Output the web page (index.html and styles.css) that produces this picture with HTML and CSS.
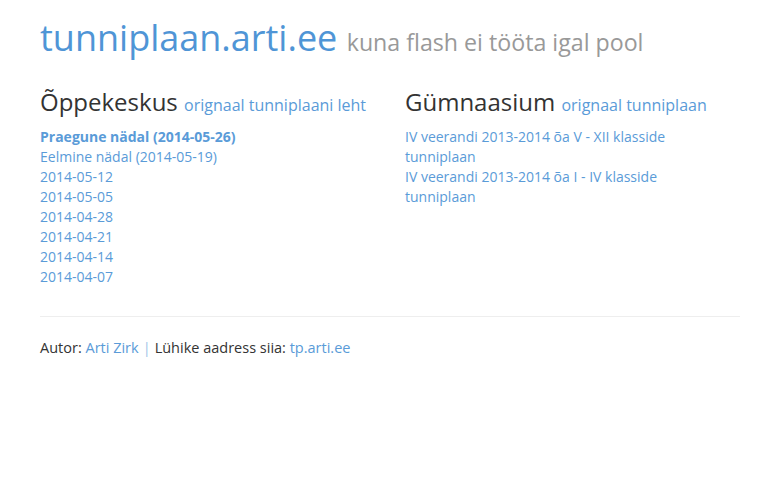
FILE: index.html
```html
<!DOCTYPE html>
<html lang="et">
<head>
<meta charset="utf-8">
<title>tunniplaan.arti.ee</title>
<link rel="stylesheet" href="styles.css">
</head>
<body>
<div class="container">
  <h1 class="title"><a href="#">tunniplaan.arti.ee</a> <small>kuna flash ei tööta igal pool</small></h1>
  <div class="columns">
    <div class="col">
      <h2>Õppekeskus <small><a href="#">orignaal tunniplaani leht</a></small></h2>
      <ul class="links">
        <li><a href="#" class="current">Praegune nädal (2014-05-26)</a></li>
        <li><a href="#">Eelmine nädal (2014-05-19)</a></li>
        <li><a href="#">2014-05-12</a></li>
        <li><a href="#">2014-05-05</a></li>
        <li><a href="#">2014-04-28</a></li>
        <li><a href="#">2014-04-21</a></li>
        <li><a href="#">2014-04-14</a></li>
        <li><a href="#">2014-04-07</a></li>
      </ul>
    </div>
    <div class="col">
      <h2>Gümnaasium <small><a href="#">orignaal tunniplaan</a></small></h2>
      <ul class="links">
        <li><a href="#">IV veerandi 2013-2014 õa V - XII klasside tunniplaan</a></li>
        <li><a href="#">IV veerandi 2013-2014 õa I - IV klasside tunniplaan</a></li>
      </ul>
    </div>
  </div>
  <hr class="divider">
  <p class="footer">Autor: <a href="#">Arti Zirk</a><span class="sep">|</span>Lühike aadress siia: <a href="#">tp.arti.ee</a></p>
</div>
</body>
</html>
```
FILE: styles.css
```css
html, body {
  margin: 0;
  padding: 0;
  background: #fff;
}
body {
  font-family: "Open Sans", "Liberation Sans", sans-serif;
  font-size: 14px;
  line-height: 20px;
  color: #333;
}
a {
  color: #5a9bd8;
  text-decoration: none;
}
.container {
  padding: 0 40px;
  width: 700px;
}
.title {
  margin: 16px 0 0;
  font-size: 36px;
  line-height: 44px;
  font-weight: 400;
}
.title a {
  color: #4f95d6;
}
.title small {
  font-size: 23.2px;
  color: #999;
}
.columns {
  display: grid;
  grid-template-columns: 335px 320px;
  column-gap: 30px;
  margin-top: 23px;
}
h2 {
  margin: 0 0 7px;
  font-size: 24px;
  line-height: 30px;
  font-weight: 400;
  color: #333;
}
h2 small {
  font-size: 16px;
}
.links {
  list-style: none;
  margin: 0;
  padding: 0;
}
.current {
  font-weight: 700;
}
.divider {
  border: 0;
  border-top: 1px solid #eee;
  margin: 29px 0 0;
}
.footer {
  margin: 21px 0 0;
  font-size: 14.5px;
}
.sep {
  color: #9cc3e8;
  padding: 0 4px 0 4px;
}
```
